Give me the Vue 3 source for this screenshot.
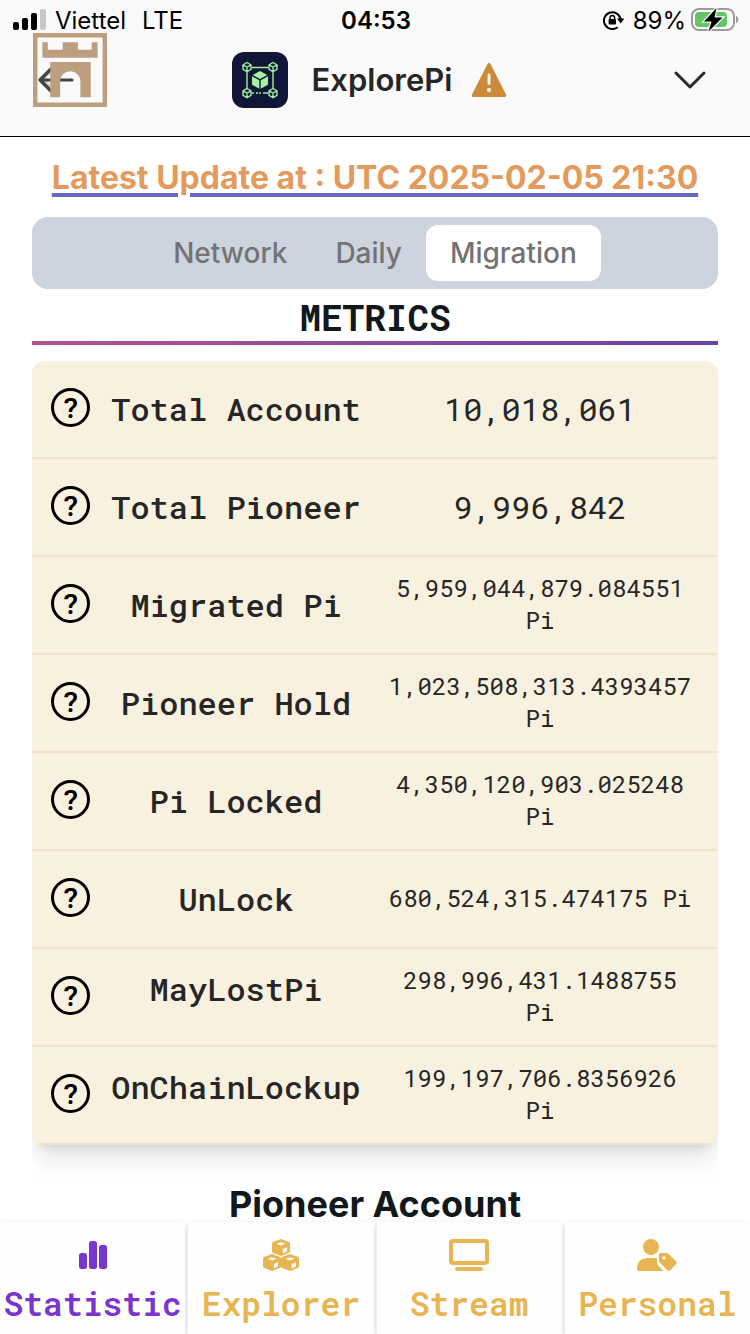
<script setup>
import { ref } from 'vue'

const tabs = ['Network', 'Daily', 'Migration']
const activeTab = ref('Migration')

const metrics = [
  { label: 'Total Account', value: '10,018,061', large: true },
  { label: 'Total Pioneer', value: '9,996,842', large: true },
  { label: 'Migrated Pi', value: '5,959,044,879.084551 Pi' },
  { label: 'Pioneer Hold', value: '1,023,508,313.4393457 Pi' },
  { label: 'Pi Locked', value: '4,350,120,903.025248 Pi' },
  { label: 'UnLock', value: '680,524,315.474175 Pi' },
  { label: 'MayLostPi', value: '298,996,431.1488755 Pi', raised: true },
  { label: 'OnChainLockup', value: '199,197,706.8356926 Pi', raised: true }
]
</script>

<template>
  <div class="page">
    <header class="top">
      <div class="status">
        <div class="carrier">
          <svg width="34" height="22" viewBox="0 0 34 22" aria-hidden="true">
            <rect x="0" y="13" width="6" height="8" rx="2" />
            <rect x="9" y="9" width="6" height="12" rx="2" />
            <rect x="18" y="4" width="6" height="17" rx="2" />
            <rect x="27" y="0" width="6" height="21" rx="2" fill="#c8c8c8" />
          </svg>
          <span>Viettel</span>
          <span class="lte">LTE</span>
        </div>
        <time class="clock">04:53</time>
        <div class="power">
          <svg width="22" height="20" viewBox="0 0 22 20" aria-hidden="true">
            <path d="M14.6 17.2A8.4 8.4 0 1 1 17.6 9" fill="none" stroke="#000" stroke-width="2" />
            <path d="M14 8.4h7.4l-3.7 5z" />
            <rect x="5.6" y="9" width="7.4" height="5.6" rx="1" />
            <path d="M7 9.5V7.8a2.3 2.3 0 0 1 4.6 0v1.7" fill="none" stroke="#000" stroke-width="1.4" />
          </svg>
          <span class="percent">89%</span>
          <svg width="48" height="24" viewBox="0 0 48 24" aria-hidden="true">
            <rect x="1" y="1" width="42" height="21" rx="7" fill="none" stroke="#9c9c9c" stroke-width="2" />
            <rect x="4" y="4" width="32" height="15" rx="4" fill="#67c466" />
            <path d="M45 8c3 .8 3 6.200 0 7z" fill="#9c9c9c" />
            <path d="M25.500 0 13 13.500h7.500L17.500 23.500 31.500 9.500h-8z" stroke="#fafafa" stroke-width="2.500" paint-order="stroke" />
          </svg>
        </div>
      </div>

      <div class="bar">
        <button class="back" type="button" aria-label="Back">
          <svg width="38" height="30" viewBox="0 0 38 30" fill="none" stroke="#444" stroke-width="3.200" stroke-linecap="round" stroke-linejoin="round" aria-hidden="true">
            <path d="M35 15H3M14 4 3 15l11 11" />
          </svg>
          <svg class="castle" width="74" height="74" viewBox="0 0 75 75" fill="#bd9f80" aria-hidden="true">
            <path d="M0 0h75v75H0zM4.500 4.500v66h66v-66z" fill-rule="evenodd" />
            <path d="M9.500 9.500h5.500v7.500h15V9.500h15.500v7.500h14V9.500h6v15.500h-56z" />
            <path d="M17.500 29.500h41v35.500H48V49a10 10 0 0 0-20.500 0v16h-10z" />
            <path d="M5 47l12.500-12v6L12 47l5.500 6v6z" fill="#444" fill-opacity=".25" />
          </svg>
        </button>
        <div class="brand">
          <svg width="56" height="56" viewBox="0 0 56 56" aria-hidden="true">
            <rect width="56" height="56" rx="12" fill="#0f1638" />
            <g fill="none" stroke="#9fee9b" stroke-width="1.400">
              <path d="M20 15.500h16M15 20v17M41 20v17M20 41h2M24 41h2M27 41h2M31 41h5" />
              <g v-for="p in [[15, 15], [41, 15], [15, 41], [41, 41]]" :key="p.join()">
                <path :transform="`translate(${p[0]} ${p[1]})`" d="M0-4.500 4-2.200v4.600L0 4.700-4 2.400v-4.600zM-4-2.200 0 0l4-2.200M0 0v4.700" />
              </g>
            </g>
            <g fill="#a4f3a0">
              <path d="M28 19l7.300 4-7.300 4-7.300-4z" />
              <path d="M20 24.200l7.300 4v8.600L20 32.700z" />
              <path d="M36 24.200l-7.300 4v8.600L36 32.700z" />
            </g>
          </svg>
          <h1>ExplorePi</h1>
          <svg width="36" height="36" viewBox="0 0 36 36" aria-hidden="true">
            <path d="M16.600 1.700q1.400-2 2.800 0L35 32.500q1 2.500-1.500 2.500h-31Q0 35 1 32.500z" fill="#cc8a3a" />
            <path d="M18 13v8.500" stroke="#fff" stroke-width="2.800" stroke-linecap="round" />
            <circle cx="18" cy="28" r="2" fill="#fff" />
          </svg>
        </div>
        <button class="menu" type="button" aria-label="Open menu">
          <svg width="34" height="22" viewBox="0 0 34 22" fill="none" stroke="#2a2a2a" stroke-width="3" stroke-linecap="round" stroke-linejoin="round" aria-hidden="true">
            <path d="M3 4l14 14L31 4" />
          </svg>
        </button>
      </div>
    </header>

    <main>
      <p class="update"><a href="#">Latest Update at : UTC 2025-02-05 21:30</a></p>

      <div class="tabs" role="tablist">
        <button
          v-for="tab in tabs"
          :key="tab"
          type="button"
          role="tab"
          :aria-selected="activeTab === tab"
          :class="{ active: activeTab === tab }"
          @click="activeTab = tab"
        >{{ tab }}</button>
      </div>

      <h2 class="metrics-title">METRICS</h2>

      <div class="table-wrap">
        <table>
          <colgroup>
            <col class="col-help" />
            <col class="col-label" />
            <col />
          </colgroup>
          <tbody>
            <tr v-for="m in metrics" :key="m.label">
              <td class="help">
                <button type="button" :aria-label="`About ${m.label}`">?</button>
              </td>
              <th scope="row" :class="{ raised: m.raised }">{{ m.label }}</th>
              <td class="value" :class="{ large: m.large }">{{ m.value }}</td>
            </tr>
          </tbody>
        </table>
      </div>

      <h2 class="section">Pioneer Account</h2>
    </main>

    <nav>
      <a href="#" class="current" aria-current="page">
        <svg width="40" height="32" viewBox="0 0 40 32" fill="currentColor" aria-hidden="true">
          <rect x="6" y="14" width="8" height="16" rx="2.500" />
          <rect x="16" y="2" width="8" height="28" rx="2.500" />
          <rect x="26" y="6" width="8" height="24" rx="2.500" />
        </svg>
        <span>Statistic</span>
      </a>
      <a href="#">
        <svg width="40" height="32" viewBox="0 0 40 32" aria-hidden="true">
          <g v-for="p in [[20, 0], [11, 15], [29, 15]]" :key="p.join()" :transform="`translate(${p[0]} ${p[1]})`">
            <path d="M0 0 7.500 2.800Q9 3.300 9 5v7q0 1.400-1.300 2L0 17l-7.700-3Q-9 13.400-9 12V5q0-1.700 1.500-2.200z" fill="currentColor" />
            <path d="M0 3.200 4.500 4.800 0 6.500-4.500 4.800zM1.800 10 6 8.300v4.200l-4.200 1.800z" fill="#fff" />
          </g>
        </svg>
        <span>Explorer</span>
      </a>
      <a href="#">
        <svg width="40" height="32" viewBox="0 0 40 32" fill="none" stroke="currentColor" stroke-width="4" aria-hidden="true">
          <rect x="2" y="2" width="36" height="22" rx="2" />
          <path d="M8 30h24" stroke-linecap="round" />
        </svg>
        <span>Stream</span>
      </a>
      <a href="#">
        <svg width="40" height="32" viewBox="0 0 40 32" fill="currentColor" aria-hidden="true">
          <circle cx="14" cy="8" r="8" />
          <path d="M11.500 19h7q.8 0 1.500.2v4.300q0 1.700 1.200 3l5.300 5.500H1.800Q0 32 0 30.200 0 19 11.500 19z" />
          <path fill-rule="evenodd" d="M22 15.500q0-1.500 1.500-1.500h6q1.200 0 2 .8l7.600 7.600q1.300 1.400 0 2.800l-6 6q-1.400 1.300-2.800 0l-7.500-7.600q-.8-.8-.8-2zM27 17.200a1.700 1.700 0 1 0 0 3.400 1.700 1.700 0 0 0 0-3.400z" />
        </svg>
        <span>Personal</span>
      </a>
    </nav>
  </div>
</template>

<style>
body {
  background: #fff;
}
</style>

<style scoped>
* {
  box-sizing: border-box;
}
.page {
  display: flex;
  flex-direction: column;
  min-height: 100vh;
  font-family: Inter, "Liberation Sans", sans-serif;
  color: #262626;
}
button {
  margin: 0;
  padding: 0;
  border: 0;
  background: none;
  color: inherit;
  font: inherit;
  cursor: pointer;
}
svg {
  display: block;
  flex: none;
}
h1,
h2,
p {
  margin: 0;
}

.top {
  background: #fafafa;
  border-bottom: 1px solid #000;
}
.status {
  display: grid;
  grid-template-columns: 1fr auto 1fr;
  align-items: center;
  height: 40px;
  padding: 0 11px 0 13px;
  color: #000;
  font-size: 24px;
}
.carrier,
.power {
  display: flex;
  align-items: center;
  gap: 8px;
}
.lte {
  margin-left: 8px;
}
.power {
  justify-content: flex-end;
}
.power .percent {
  margin-right: -3px;
}
.clock {
  font-weight: 600;
}
.bar {
  display: grid;
  grid-template-columns: 1fr auto 1fr;
  align-items: center;
  height: 96px;
  padding: 0 43px 16px 32px;
}
.back {
  position: relative;
  justify-self: start;
  padding-left: 5px;
}
.castle {
  position: absolute;
  left: 1px;
  top: -32px;
}
.brand {
  display: flex;
  align-items: center;
}
h1 {
  margin: 0 19px 0 24px;
  font-size: 31px;
  font-weight: 600;
  line-height: 40px;
}
.menu {
  justify-self: end;
}

main {
  flex: 1;
  padding: 21px 32px 0;
  text-align: center;
}
.update {
  font-size: 32px;
  font-weight: 700;
  line-height: 40px;
  margin-bottom: 19px;
}
.update a {
  color: #e39b5d;
  text-decoration: underline 4px #6569c0;
  text-underline-offset: 4px;
}
.tabs {
  display: flex;
  justify-content: center;
  padding: 8px;
  border-radius: 16px;
  background: #cdd3df;
}
.tabs button {
  padding: 0 24px;
  border-radius: 12px;
  color: #737373;
  font-size: 28px;
  font-weight: 500;
  line-height: 56px;
}
.tabs .active {
  background: #fff;
}
.metrics-title {
  margin: 8px 0 16px;
  padding-bottom: 4px;
  border-bottom: 4px solid;
  border-image: linear-gradient(90deg, #b8528f, #6644ad) 1;
  color: #12181c;
  font-family: "Roboto Mono", "DejaVu Sans Mono", monospace;
  font-size: 36px;
  font-weight: 700;
  line-height: 40px;
}

.table-wrap {
  overflow: hidden;
  padding-bottom: 41px;
}
table {
  width: 100%;
  table-layout: fixed;
  border-spacing: 0;
  border-radius: 12px;
  overflow: hidden;
  background: #f9f1e0;
  box-shadow: 0 20px 25px -5px rgba(0, 0, 0, 0.1), 0 8px 10px -6px rgba(0, 0, 0, 0.1);
  font-family: "Roboto Mono", "DejaVu Sans Mono", monospace;
}
.col-help {
  width: 77px;
}
.col-label {
  width: 254px;
}
th,
td {
  height: 98px;
  padding: 0;
  border-bottom: 2px solid #f0e4c8;
  vertical-align: middle;
}
th {
  font-size: 32px;
  font-weight: 500;
  line-height: 48px;
  white-space: nowrap;
}
.raised {
  padding-bottom: 16px;
}
.help button {
  display: block;
  width: 39px;
  height: 39px;
  margin: 0 auto 3px;
  border: 3px solid #000;
  border-radius: 50%;
  color: #000;
  font-family: "Roboto Mono", Roboto, sans-serif;
  font-size: 28px;
  font-weight: 600;
  line-height: 33px;
}
.value {
  padding: 0 25px 2px 24px;
  font-size: 24px;
  line-height: 32px;
}
.large {
  padding-bottom: 0;
  font-size: 32px;
}
.section {
  color: #12181c;
  font-size: 36px;
  font-weight: 700;
  line-height: 36px;
}

nav {
  position: sticky;
  bottom: 0;
  display: grid;
  grid-template-columns: repeat(4, 1fr);
  gap: 3px;
  background: #fff;
}
nav a {
  display: flex;
  flex-direction: column;
  align-items: center;
  gap: 12px;
  height: 112px;
  padding-top: 17px;
  background: #fefefe;
  box-shadow: 0 2px 6px rgba(0, 0, 0, 0.12);
  color: #e7b551;
  font-family: "Roboto Mono", "DejaVu Sans Mono", monospace;
  font-size: 33px;
  font-weight: 600;
  line-height: 40px;
  text-decoration: none;
}
nav .current {
  color: #7b35cf;
}
</style>
